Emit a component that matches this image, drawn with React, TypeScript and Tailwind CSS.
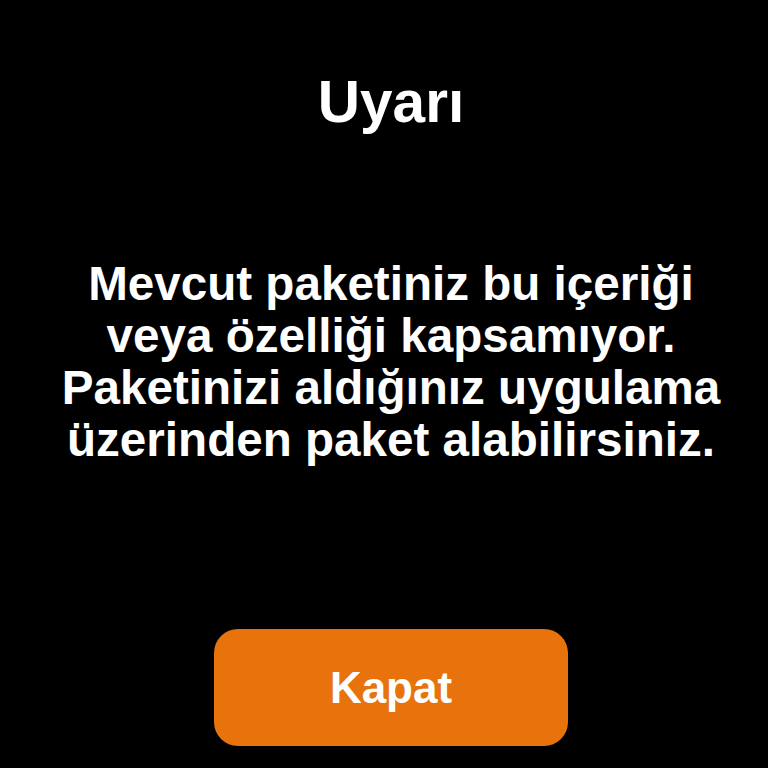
export default function App() {
  return (
    <div
      className="flex h-[768px] w-[768px] flex-col items-center bg-black pl-[14px] text-white"
      style={{ fontFamily: '"Liberation Sans", Arial, sans-serif' }}
    >
      <h1 className="mt-[73px] text-[58.5px] font-bold leading-[58px]">Uyarı</h1>
      <p className="mt-[127px] text-center text-[47.6px] font-bold leading-[52px]">
        Mevcut paketiniz bu içeriği
        <br />
        veya özelliği kapsamıyor.
        <br />
        Paketinizi aldığınız uygulama
        <br />
        üzerinden paket alabilirsiniz.
      </p>
      <button className="mt-[163px] flex h-[117px] w-[354px] items-center justify-center rounded-[24px] bg-[#e8730c] text-[44px] font-bold text-white">
        Kapat
      </button>
    </div>
  )
}
